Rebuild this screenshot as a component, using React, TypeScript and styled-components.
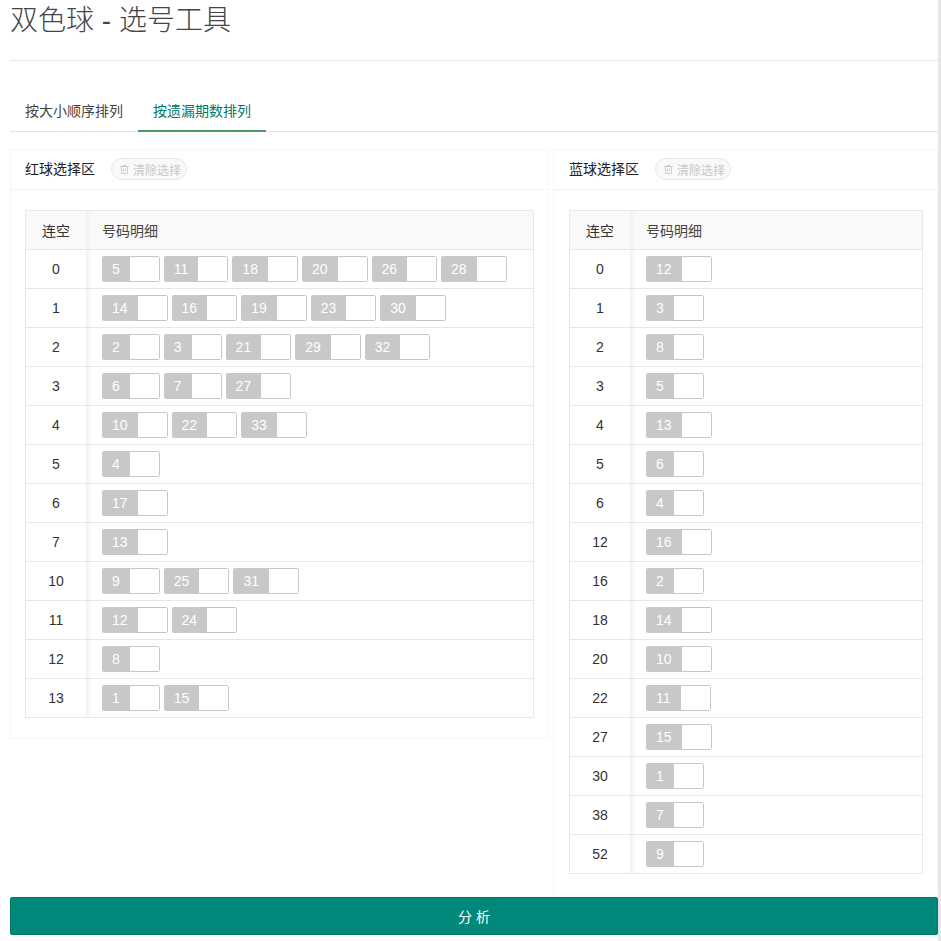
import React from "react";
import styled, { createGlobalStyle } from "styled-components";

const Global = createGlobalStyle`
  html, body { margin: 0; padding: 0; background: #fff; }
  body { font-family: "Liberation Sans", "Noto Sans CJK SC", sans-serif; font-size: 14px; color: #333; overflow: hidden; }
`;

const Page = styled.div`
  box-sizing: border-box;
  width: 941px;
  height: 941px;
  padding: 0 0 0 10px;
  border-right: 3px solid #e6e6e6;
  display: flex;
  flex-direction: column;
  overflow: hidden;
`;

const Heading = styled.h1`
  margin: 0;
  height: 60px;
  box-sizing: content-box;
  border-bottom: 1px solid #e8e8e8;
  font-size: 28px;
  font-weight: 300;
  line-height: 42px;
  color: #444;
`;

const Tabs = styled.div`
  display: flex;
  margin-top: 30px;
  height: 40px;
  border-bottom: 1px solid #e4e4e4;
  box-sizing: content-box;
`;

const Tab = styled.div<{ $active?: boolean }>`
  padding: 0 15px;
  line-height: 40px;
  height: 41px;
  box-sizing: border-box;
  color: ${(p) => (p.$active ? "#00796b" : "#444")};
  border-bottom: 2px solid ${(p) => (p.$active ? "#4a9a6c" : "transparent")};
`;

const Columns = styled.div`
  display: grid;
  grid-template-columns: 539px 385px;
  column-gap: 4px;
  align-items: start;
  margin-top: 17px;
`;

const Card = styled.section`
  border: 1px solid #f7f7f7;
`;

const CardHead = styled.header<{ $inset: number }>`
  display: flex;
  align-items: center;
  height: 36px;
  padding: 0 14px 3px ${(p) => p.$inset}px;
  border-bottom: 1px solid #f2f2f2;
  color: #222;
`;

const ClearButton = styled.button`
  display: inline-flex;
  align-items: center;
  gap: 4px;
  margin: 2px 0 0 16px;
  height: 22px;
  width: 76px;
  padding: 0 0 0 8px;
  box-sizing: border-box;
  border: 1px solid #e8e8e8;
  border-radius: 11px;
  background: #f9f9f9;
  color: #c8c8c8;
  font: inherit;
  font-size: 12px;
`;

const CardBody = styled.div<{ $inset: number }>`
  padding: 20px 14px 20px ${(p) => p.$inset}px;
`;

const Table = styled.div`
  border: 1px solid #e8e8e8;
  border-bottom: 0;
`;

const Row = styled.div<{ $head?: boolean }>`
  display: flex;
  height: 39px;
  box-sizing: border-box;
  border-bottom: 1px solid #e6e6e6;
  background: ${(p) => (p.$head ? "#f9f9f9" : "#fff")};
`;

const GapCell = styled.div`
  position: relative;
  flex: 0 0 61px;
  box-sizing: border-box;
  display: flex;
  align-items: center;
  justify-content: center;
  border-right: 1px solid #e8e8e8;
  color: #333;
  &::after {
    content: "";
    position: absolute;
    top: 0;
    bottom: 0;
    left: 100%;
    width: 6px;
    background: linear-gradient(to right, #f1f1f1, rgba(255, 255, 255, 0));
  }
`;

const DetailCell = styled.div`
  flex: 1;
  display: flex;
  align-items: center;
  gap: 4px;
  padding-left: 15px;
  color: #444;
`;

const Chip = styled.span`
  display: inline-flex;
  height: 26px;
  box-sizing: border-box;
  border-radius: 2px;
  overflow: hidden;
  background: #fff;
`;

const ChipNumber = styled.span`
  padding: 0 10px;
  line-height: 26px;
  background: #c8c8c8;
  color: #fff;
`;

const ChipBlank = styled.span`
  width: 30px;
  box-sizing: border-box;
  border: 1px solid #c6c6c6;
  border-left: 0;
  border-radius: 0 2px 2px 0;
`;

const SubmitRow = styled.div`
  margin-top: auto;
  margin-bottom: 6px;
`;

const Submit = styled.button`
  display: block;
  width: 100%;
  height: 38px;
  padding: 0;
  border: 1px solid #00796b;
  border-radius: 2px;
  background: #00897b;
  color: #fff;
  font: inherit;
`;

const Trash = () => (
  <svg width="9" height="9" viewBox="0 0 9 9" fill="none" stroke="#cfcfcf" strokeWidth="1">
    <path d="M0 1.500h9M3 1.500V.5h3v1M1.500 1.500V8.500h6V1.500M3.500 3.500v3M5.500 3.500v3" />
  </svg>
);

type Data = [string, number[]][];

const red: Data = [
  ["0", [5, 11, 18, 20, 26, 28]],
  ["1", [14, 16, 19, 23, 30]],
  ["2", [2, 3, 21, 29, 32]],
  ["3", [6, 7, 27]],
  ["4", [10, 22, 33]],
  ["5", [4]],
  ["6", [17]],
  ["7", [13]],
  ["10", [9, 25, 31]],
  ["11", [12, 24]],
  ["12", [8]],
  ["13", [1, 15]],
];

const blue: Data = [
  ["0", [12]],
  ["1", [3]],
  ["2", [8]],
  ["3", [5]],
  ["4", [13]],
  ["5", [6]],
  ["6", [4]],
  ["12", [16]],
  ["16", [2]],
  ["18", [14]],
  ["20", [10]],
  ["22", [11]],
  ["27", [15]],
  ["30", [1]],
  ["38", [7]],
  ["52", [9]],
];

const Zone = ({ title, data, inset }: { title: string; data: Data; inset: number }) => (
  <Card>
    <CardHead $inset={inset}>
      {title}
      <ClearButton>
        <Trash />
        清除选择
      </ClearButton>
    </CardHead>
    <CardBody $inset={inset}>
      <Table>
        <Row $head>
          <GapCell>连空</GapCell>
          <DetailCell>号码明细</DetailCell>
        </Row>
        {data.map(([gap, nums]) => (
          <Row key={gap}>
            <GapCell>{gap}</GapCell>
            <DetailCell>
              {nums.map((n) => (
                <Chip key={n}>
                  <ChipNumber>{n}</ChipNumber>
                  <ChipBlank />
                </Chip>
              ))}
            </DetailCell>
          </Row>
        ))}
      </Table>
    </CardBody>
  </Card>
);

export default function App() {
  return (
    <Page>
      <Global />
      <Heading>双色球 - 选号工具</Heading>
      <Tabs>
        <Tab>按大小顺序排列</Tab>
        <Tab $active>按遗漏期数排列</Tab>
      </Tabs>
      <Columns>
        <Zone title="红球选择区" data={red} inset={14} />
        <Zone title="蓝球选择区" data={blue} inset={15} />
      </Columns>
      <SubmitRow>
        <Submit>分 析</Submit>
      </SubmitRow>
    </Page>
  );
}
